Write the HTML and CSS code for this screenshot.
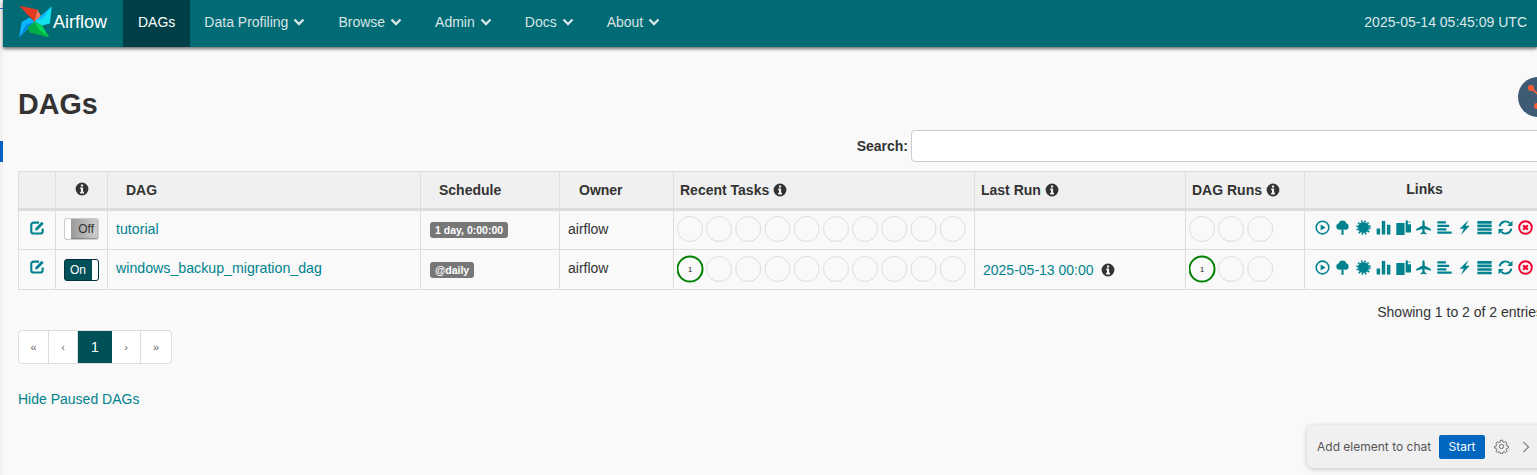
FILE: index.html
```html
<!DOCTYPE html>
<html lang="en">

<head>
    <meta charset="UTF-8">
    <meta name="viewport" content="width=device-width, initial-scale=1.0">
    <title>Airflow - DAGs</title>
    <link rel="stylesheet" href="styles.css">
</head>

<body>
    <svg class="sprites" aria-hidden="true">
        <symbol id="i-info" viewBox="0 0 14 14">
            <path fill-rule="evenodd" d="M7 .6a6.400 6.400 0 1 0 0 12.800A6.400 6.400 0 0 0 7 .6zM5.900 2.600h2.200v1.900H5.900zM5.200 5.600h2.900v4.200h.9v1.600H5.100V9.800h.9V7.200h-.8z"/>
        </symbol>
        <symbol id="i-edit" viewBox="0 0 14 14">
            <path fill="none" stroke="currentColor" stroke-width="2" d="M11.800 8v2.400a2.200 2.200 0 0 1-2.200 2.200H3.400a2.200 2.200 0 0 1-2.200-2.200V4.600a2.200 2.200 0 0 1 2.200-2.200h5"/>
            <path d="M5.200 7.400 10.900 1.700l1.900 1.900-5.700 5.700-2.400.5z"/>
        </symbol>
        <symbol id="i-play" viewBox="0 0 14 14">
            <circle cx="7" cy="7" r="5.900" fill="none" stroke="currentColor" stroke-width="1.500"/>
            <path d="M5.300 4.200 9.900 7l-4.600 2.800z"/>
        </symbol>
        <symbol id="i-tree" viewBox="0 0 14 14">
            <circle cx="7" cy="4" r="3.500"/>
            <circle cx="4.300" cy="6" r="3"/>
            <circle cx="9.700" cy="6" r="3"/>
            <path d="M6 7h2v6.800H6z"/>
        </symbol>
        <symbol id="i-cert" viewBox="0 0 14 14">
            <circle cx="7" cy="7" r="5.200"/>
            <circle cx="7" cy="7" r="6" fill="none" stroke="currentColor" stroke-width="1.600" stroke-dasharray="1.500 1.640"/>
        </symbol>
        <symbol id="i-bars" viewBox="0 0 14 14">
            <path d="M.6 8h3.200v5.500H.6zM5.400 1h3.200v12.500H5.400zM10.200 4.500h3.200v9h-3.200z"/>
        </symbol>
        <symbol id="i-files" viewBox="0 0 14 14">
            <path d="M.3 2.800h7.700V14H.3zM9 .4h2.100v3.500h2.900v7.700H9z"/>
            <path d="M11.900.5 14 2.900h-2.100z" opacity=".6"/>
        </symbol>
        <symbol id="i-plane" viewBox="0 0 14 14">
            <path d="M7 .2c.8 0 1.100 1.200 1.100 2.500v2.400l5.700 3.300v1.700L8.100 8.400v2.700l1.600 1.200v1.300L7 12.900l-2.700.7v-1.300l1.600-1.200V8.400L.2 10.100V8.400l5.700-3.300V2.700C5.900 1.400 6.200.2 7 .2z"/>
        </symbol>
        <symbol id="i-gantt" viewBox="0 0 14 14">
            <path d="M.3 1.200h8v2.100h-8zM.3 4.400h11v2.100h-11zM.3 7.600h8.500v2.100H.3zM.3 10.800h13.400v2.100H.3z"/>
        </symbol>
        <symbol id="i-flash" viewBox="0 0 14 14">
            <path d="M10.800 0 2.400 8.200h3.900L3.800 14l8-8.600H8z"/>
        </symbol>
        <symbol id="i-list" viewBox="0 0 14 14">
            <path d="M.3 1h13.400v2.400H.3zM.3 4.300h13.400v2.400H.3zM.3 7.600h13.400V10H.3zM.3 10.900h13.400v2.400H.3z"/>
        </symbol>
        <symbol id="i-refresh" viewBox="0 0 14 14">
            <path fill="none" stroke="currentColor" stroke-width="1.800" d="M1.500 6A5.600 5.600 0 0 1 11 3M12.500 8A5.600 5.600 0 0 1 3 11"/>
            <path d="M13.500.6v4.900H8.600zM.5 13.400V8.500h4.900z"/>
        </symbol>
        <symbol id="i-remove" viewBox="0 0 14 14">
            <circle cx="7" cy="7" r="5.900" fill="none" stroke="currentColor" stroke-width="1.800"/>
            <path fill="none" stroke="currentColor" stroke-width="2" d="M4.800 4.800l4.400 4.400M9.200 4.800l-4.400 4.400"/>
        </symbol>
        <symbol id="i-chev" viewBox="0 0 12 8">
            <path fill="none" stroke="currentColor" stroke-width="2.400" d="M1.500 1.500 6 6l4.500-4.500"/>
        </symbol>
    </svg>

    <div class="shell">
        <div class="rail">
            <span class="rail-tick"></span>
            <span class="rail-mark"></span>
        </div>

        <div class="page">
            <nav class="navbar">
                <a class="brand" href="#">
                    <svg class="brand-logo" viewBox="24 10 110 115">
                        <path fill="#e43921" d="M28 18 85 30 76 68 58 50z"/>
                        <path fill="#ff7557" d="M85 30 96 50 76 68z"/>
                        <path fill="#11e1ee" d="M130 20 124 74 100 80 76 68z"/>
                        <path fill="#0cb6ff" d="M130 20 96 50 76 68 104 56z"/>
                        <path fill="#0cb6ff" d="M28 118 35 70 60 55 76 68z"/>
                        <path fill="#0086d6" d="M28 118 58 84 76 68 50 78z"/>
                        <path fill="#00ad46" d="M122 118 60 102 55 86 76 68z"/>
                        <path fill="#04d659" d="M122 118 100 80 76 68 92 96z"/>
                    </svg>
                    <span>Airflow</span>
                </a>
                <ul class="nav-list">
                    <li class="nav-item active">DAGs</li>
                    <li class="nav-item">Data Profiling <svg class="chev"><use href="#i-chev"/></svg></li>
                    <li class="nav-item">Browse <svg class="chev"><use href="#i-chev"/></svg></li>
                    <li class="nav-item">Admin <svg class="chev"><use href="#i-chev"/></svg></li>
                    <li class="nav-item">Docs <svg class="chev"><use href="#i-chev"/></svg></li>
                    <li class="nav-item">About <svg class="chev"><use href="#i-chev"/></svg></li>
                </ul>
                <span class="clock">2025-05-14 05:45:09 UTC</span>
            </nav>

            <main class="content">
                <h1>DAGs</h1>

                <div class="search">
                    <label for="dag-search">Search:</label>
                    <input id="dag-search" type="text">
                </div>

                <table class="dags">
                    <colgroup>
                        <col class="c-edit">
                        <col class="c-toggle">
                        <col class="c-dag">
                        <col class="c-sched">
                        <col class="c-owner">
                        <col class="c-tasks">
                        <col class="c-last">
                        <col class="c-runs">
                        <col class="c-links">
                    </colgroup>
                    <thead>
                        <tr>
                            <th></th>
                            <th class="mid"><svg class="ico"><use href="#i-info"/></svg></th>
                            <th class="sort">DAG</th>
                            <th class="sort">Schedule</th>
                            <th class="sort">Owner</th>
                            <th>Recent Tasks <svg class="ico"><use href="#i-info"/></svg></th>
                            <th>Last Run <svg class="ico"><use href="#i-info"/></svg></th>
                            <th>DAG Runs <svg class="ico"><use href="#i-info"/></svg></th>
                            <th class="mid">Links</th>
                        </tr>
                    </thead>
                    <tbody>
                        <tr>
                            <td class="mid"><svg class="ico link"><use href="#i-edit"/></svg></td>
                            <td class="mid">
                                <div class="toggle off"><span class="knob"></span><span>Off</span></div>
                            </td>
                            <td><a href="#">tutorial</a></td>
                            <td><span class="tag">1 day, 0:00:00</span></td>
                            <td>airflow</td>
                            <td class="dots">
                                <svg class="circles tasks" viewBox="0 0 292 30">
                                    <circle cx="13" cy="15" r="12.500"/><circle cx="42" cy="15" r="12.500"/><circle cx="71.200" cy="15" r="12.500"/><circle cx="100.500" cy="15" r="12.500"/><circle cx="129.700" cy="15" r="12.500"/><circle cx="159" cy="15" r="12.500"/><circle cx="188" cy="15" r="12.500"/><circle cx="217.200" cy="15" r="12.500"/><circle cx="246.500" cy="15" r="12.500"/><circle cx="275.700" cy="15" r="12.500"/>
                                </svg>
                            </td>
                            <td></td>
                            <td class="dots">
                                <svg class="circles runs" viewBox="0 0 90 30">
                                    <circle cx="13" cy="15" r="12.500"/><circle cx="42" cy="15" r="12.500"/><circle cx="71.200" cy="15" r="12.500"/>
                                </svg>
                            </td>
                            <td class="actions">
                                <svg class="act"><use href="#i-play"/></svg><svg class="act"><use href="#i-tree"/></svg><svg class="act"><use href="#i-cert"/></svg><svg class="act"><use href="#i-bars"/></svg><svg class="act"><use href="#i-files"/></svg><svg class="act"><use href="#i-plane"/></svg><svg class="act"><use href="#i-gantt"/></svg><svg class="act"><use href="#i-flash"/></svg><svg class="act"><use href="#i-list"/></svg><svg class="act"><use href="#i-refresh"/></svg><svg class="act red"><use href="#i-remove"/></svg>
                            </td>
                        </tr>
                        <tr>
                            <td class="mid"><svg class="ico link"><use href="#i-edit"/></svg></td>
                            <td class="mid">
                                <div class="toggle on"><span>On</span><span class="knob"></span></div>
                            </td>
                            <td><a href="#">windows_backup_migration_dag</a></td>
                            <td><span class="tag">@daily</span></td>
                            <td>airflow</td>
                            <td class="dots">
                                <svg class="circles tasks" viewBox="0 0 292 30">
                                    <circle class="ok" cx="13" cy="15" r="12.500"/><text x="13" y="18">1</text><circle cx="42" cy="15" r="12.500"/><circle cx="71.200" cy="15" r="12.500"/><circle cx="100.500" cy="15" r="12.500"/><circle cx="129.700" cy="15" r="12.500"/><circle cx="159" cy="15" r="12.500"/><circle cx="188" cy="15" r="12.500"/><circle cx="217.200" cy="15" r="12.500"/><circle cx="246.500" cy="15" r="12.500"/><circle cx="275.700" cy="15" r="12.500"/>
                                </svg>
                            </td>
                            <td class="last"><a href="#">2025-05-13 00:00</a> <svg class="ico"><use href="#i-info"/></svg></td>
                            <td class="dots">
                                <svg class="circles runs" viewBox="0 0 90 30">
                                    <circle class="ok" cx="13" cy="15" r="12.500"/><text x="13" y="18">1</text><circle cx="42" cy="15" r="12.500"/><circle cx="71.200" cy="15" r="12.500"/>
                                </svg>
                            </td>
                            <td class="actions">
                                <svg class="act"><use href="#i-play"/></svg><svg class="act"><use href="#i-tree"/></svg><svg class="act"><use href="#i-cert"/></svg><svg class="act"><use href="#i-bars"/></svg><svg class="act"><use href="#i-files"/></svg><svg class="act"><use href="#i-plane"/></svg><svg class="act"><use href="#i-gantt"/></svg><svg class="act"><use href="#i-flash"/></svg><svg class="act"><use href="#i-list"/></svg><svg class="act"><use href="#i-refresh"/></svg><svg class="act red"><use href="#i-remove"/></svg>
                            </td>
                        </tr>
                    </tbody>
                </table>

                <p class="entries">Showing 1 to 2 of 2 entries</p>

                <ul class="pager">
                    <li class="edge">&laquo;</li>
                    <li>&lsaquo;</li>
                    <li class="current">1</li>
                    <li>&rsaquo;</li>
                    <li class="edge">&raquo;</li>
                </ul>

                <a class="hide-paused" href="#">Hide Paused DAGs</a>
            </main>
        </div>
    </div>

    <!-- floating bits from browser extensions -->
    <div class="hub-badge">
        <svg viewBox="0 0 40 40">
            <circle cx="20" cy="20" r="20" fill="#3f5a75"/>
            <path stroke="#ff5c35" stroke-width="1.800" d="M13 11 22 19"/>
            <circle cx="13" cy="11" r="3" fill="#ff5c35"/>
            <circle cx="19" cy="29" r="3" fill="#ff5c35"/>
        </svg>
    </div>

    <div class="chat-widget">
        <span class="chat-label">Add element to chat</span>
        <button class="chat-start">Start</button>
        <svg class="chat-gear" viewBox="0 0 16 16">
            <circle cx="8" cy="8" r="2.300"/>
            <path d="M6.900 1.300h2.200l.4 1.800 1.300.6 1.600-1 1.500 1.600-1 1.500.6 1.300 1.800.4v2.200l-1.800.4-.6 1.300 1 1.600-1.500 1.500-1.600-1-1.300.6-.4 1.800H6.900l-.4-1.800-1.300-.6-1.600 1-1.500-1.500 1-1.600-.6-1.300-1.800-.4V7.700l1.800-.4.6-1.300-1-1.500 1.500-1.600 1.600 1 1.300-.6z"/>
        </svg>
        <svg class="chat-arrow" viewBox="0 0 8 12">
            <path d="M1.500 1 6.500 6l-5 5"/>
        </svg>
    </div>
</body>

</html>
```

FILE: styles.css
```css
* {
    box-sizing: border-box;
}

html,
body {
    margin: 0;
    height: 475px;
    overflow: hidden;
}

body {
    position: relative;
    font-family: "Liberation Sans", Arial, sans-serif;
    font-size: 14px;
    color: #333;
    background-color: #f9f9f9;
}

a {
    color: #00838f;
    text-decoration: none;
}

.sprites {
    display: none;
}

.shell {
    display: flex;
    height: 475px;
}

/* strip on the far left */
.rail {
    flex: 0 0 3px;
    display: flex;
    flex-direction: column;
    background-color: #f1f1f1;
}

.rail-tick {
    height: 1px;
    margin-top: 8px;
    background-color: #1a73d9;
}

.rail-mark {
    height: 21px;
    margin-top: 132px;
    background-color: #0a5fc4;
}

.page {
    flex: 0 0 1560px;
}

/* navbar */
.navbar {
    display: flex;
    align-items: stretch;
    width: 1534px;
    height: 47px;
    background-color: #016b75;
    box-shadow: 0 2px 3px rgba(0, 0, 0, 0.55);
}

.brand {
    display: flex;
    align-items: center;
    width: 120px;
    padding-left: 15px;
    padding-bottom: 2px;
    font-size: 18px;
    color: #fff;
}

.brand-logo {
    width: 35px;
    height: 37px;
    margin-bottom: 2px;
}

.nav-list {
    display: flex;
    margin: 0;
    padding: 0;
    list-style: none;
}

.nav-item {
    display: flex;
    align-items: center;
    gap: 5px;
    padding: 0 19px 3px 14px;
    color: #d9e4e5;
}

.nav-item.active {
    padding: 0 15px 3px;
    color: #fff;
    background-color: #003f47;
}

.chev {
    width: 12px;
    height: 8px;
}

.clock {
    align-self: center;
    margin-left: auto;
    margin-right: 10px;
    margin-bottom: 3px;
    color: #dfe8e9;
}

/* main */
.content {
    width: 1542px;
    padding-left: 15px;
}

h1 {
    margin: 0;
    padding-top: 41px;
    height: 83px;
    font-size: 28.700px;
    line-height: 33px;
    font-weight: bold;
    color: #333;
}

.search {
    display: flex;
    justify-content: flex-end;
    align-items: center;
    gap: 3px;
    height: 32px;
    font-weight: bold;
}

.search input {
    width: 634px;
    height: 32px;
    border: 1px solid #ccc;
    border-radius: 4px;
    background-color: #fff;
}

.dags {
    width: 1527px;
    margin-top: 9px;
    table-layout: fixed;
    border-collapse: collapse;
}

.c-edit { width: 37px; }
.c-toggle { width: 52px; }
.c-dag { width: 313px; }
.c-sched { width: 139px; }
.c-owner { width: 114px; }
.c-tasks { width: 301px; }
.c-last { width: 211px; }
.c-runs { width: 119px; }

.dags th,
.dags td {
    padding: 0 6px;
    border: 1px solid #ddd;
    text-align: left;
    white-space: nowrap;
}

.dags th {
    height: 38px;
    font-weight: bold;
    background-color: #f0f0f0;
    border-bottom: 3px solid #ddd;
}

.dags td {
    height: 40px;
    padding-bottom: 2px;
    vertical-align: middle;
}

.dags th.sort {
    padding-left: 18px;
}

.dags th:nth-child(5) {
    padding-left: 19px;
}

.dags th.mid,
.dags td.mid {
    text-align: center;
    padding: 0 0 2px;
}

.dags td:nth-child(3),
.dags td:nth-child(5) {
    padding-left: 8px;
}

.dags td:nth-child(3) a {
    font-size: 14.200px;
}

.dags td:nth-child(4) {
    padding-left: 9px;
}

/* second row's text sits a bit higher than the first */
.dags tbody tr:nth-child(2) td:nth-child(3),
.dags tbody tr:nth-child(2) td:nth-child(5) {
    padding-bottom: 4px;
}

.dags td.dots {
    padding: 0 0 2px 3px;
}

.dags td.last {
    padding: 0 0 0 8px;
}

.dags td.last .ico {
    margin-left: 4px;
}

.ico {
    width: 14px;
    height: 14px;
    fill: #333;
    vertical-align: -2px;
}

.ico.link {
    width: 15px;
    height: 15px;
    fill: #00838f;
    color: #00838f;
    vertical-align: 1px;
}

.tag {
    display: inline-block;
    padding: 0 5px;
    height: 16px;
    line-height: 16px;
    border-radius: 3px;
    font-size: 10.500px;
    font-weight: bold;
    color: #fff;
    background-color: #777;
    vertical-align: -1px;
}

/* on / off switch */
.toggle {
    display: flex;
    justify-content: space-between;
    align-items: center;
    width: 35px;
    height: 22px;
    margin: 0 auto 0 8px;
    border: 1px solid #ccc;
    border-radius: 3px;
    font-size: 12px;
    overflow: hidden;
}

.toggle .knob {
    width: 6px;
    height: 100%;
    background-color: #fff;
}

.toggle.off {
    padding-right: 4px;
    color: #333;
    background: linear-gradient(90deg, #8f8f8f, #c9c9c9 90%);
    box-shadow: inset 0 -1px 1px rgba(0, 0, 0, 0.25);
}

.toggle.on {
    margin-top: 2px;
    padding-left: 5px;
    border-color: #00333a;
    color: #fff;
    background-color: #00515a;
}

.circles {
    display: block;
    height: 30px;
}

.circles.tasks {
    width: 292px;
}

.circles.runs {
    width: 90px;
}

.circles circle {
    fill: none;
    stroke: #ddd;
    stroke-width: 1;
}

.circles circle.ok {
    stroke: #008000;
    stroke-width: 2;
}

.circles text {
    font-size: 7.500px;
    text-anchor: middle;
    fill: #111;
}

.dags td.actions {
    padding: 0 0 0 10px;
}

.act {
    width: 15px;
    height: 15px;
    margin-right: 5.300px;
    fill: #00838f;
    color: #00838f;
    vertical-align: 2px;
}

.act.red {
    fill: #f0002e;
    color: #f0002e;
}

.entries {
    width: 1525px;
    margin: 14px 0 0;
    line-height: 17px;
    text-align: right;
}

/* pagination */
.pager {
    display: flex;
    width: 154px;
    height: 34px;
    margin: 9px 0 0;
    padding: 0;
    list-style: none;
    border: 1px solid #ddd;
    border-radius: 4px;
    background-color: #fff;
    overflow: hidden;
}

.pager li {
    display: flex;
    flex: 0 0 29px;
    align-items: center;
    justify-content: center;
    border-right: 1px solid #ddd;
    font-size: 11px;
    color: #666;
}

.pager li.edge {
    flex-basis: 30px;
}

.pager li:last-child {
    border-right: 0;
}

.pager li.current {
    flex-basis: 34px;
    font-size: 14px;
    color: #fff;
    background-color: #005058;
    border-right: 0;
}

.hide-paused {
    display: block;
    margin-top: 27px;
}

/* extension overlays */
.hub-badge {
    position: absolute;
    left: 1518px;
    top: 77px;
    width: 40px;
    height: 40px;
}

.chat-widget {
    position: absolute;
    left: 1307px;
    top: 425px;
    display: flex;
    align-items: center;
    width: 240px;
    height: 43px;
    padding-left: 10px;
    border-radius: 6px;
    background-color: #f0f0f0;
    box-shadow: 0 1px 5px rgba(0, 0, 0, 0.22);
    font-family: Inter, "Liberation Sans", sans-serif;
    font-size: 12px;
    color: #555;
}

.chat-label {
    width: 122px;
    white-space: nowrap;
}

.chat-start {
    width: 46px;
    height: 24px;
    padding: 0;
    border: 0;
    border-radius: 2px;
    font-family: inherit;
    font-size: 12px;
    color: #fff;
    background-color: #0067c0;
}

.chat-gear {
    width: 15px;
    height: 15px;
    margin-left: 9px;
    fill: none;
    stroke: #666;
    stroke-width: 1;
}

.chat-arrow {
    width: 8px;
    height: 12px;
    margin-left: 13px;
    fill: none;
    stroke: #777;
    stroke-width: 1.100;
}
```
